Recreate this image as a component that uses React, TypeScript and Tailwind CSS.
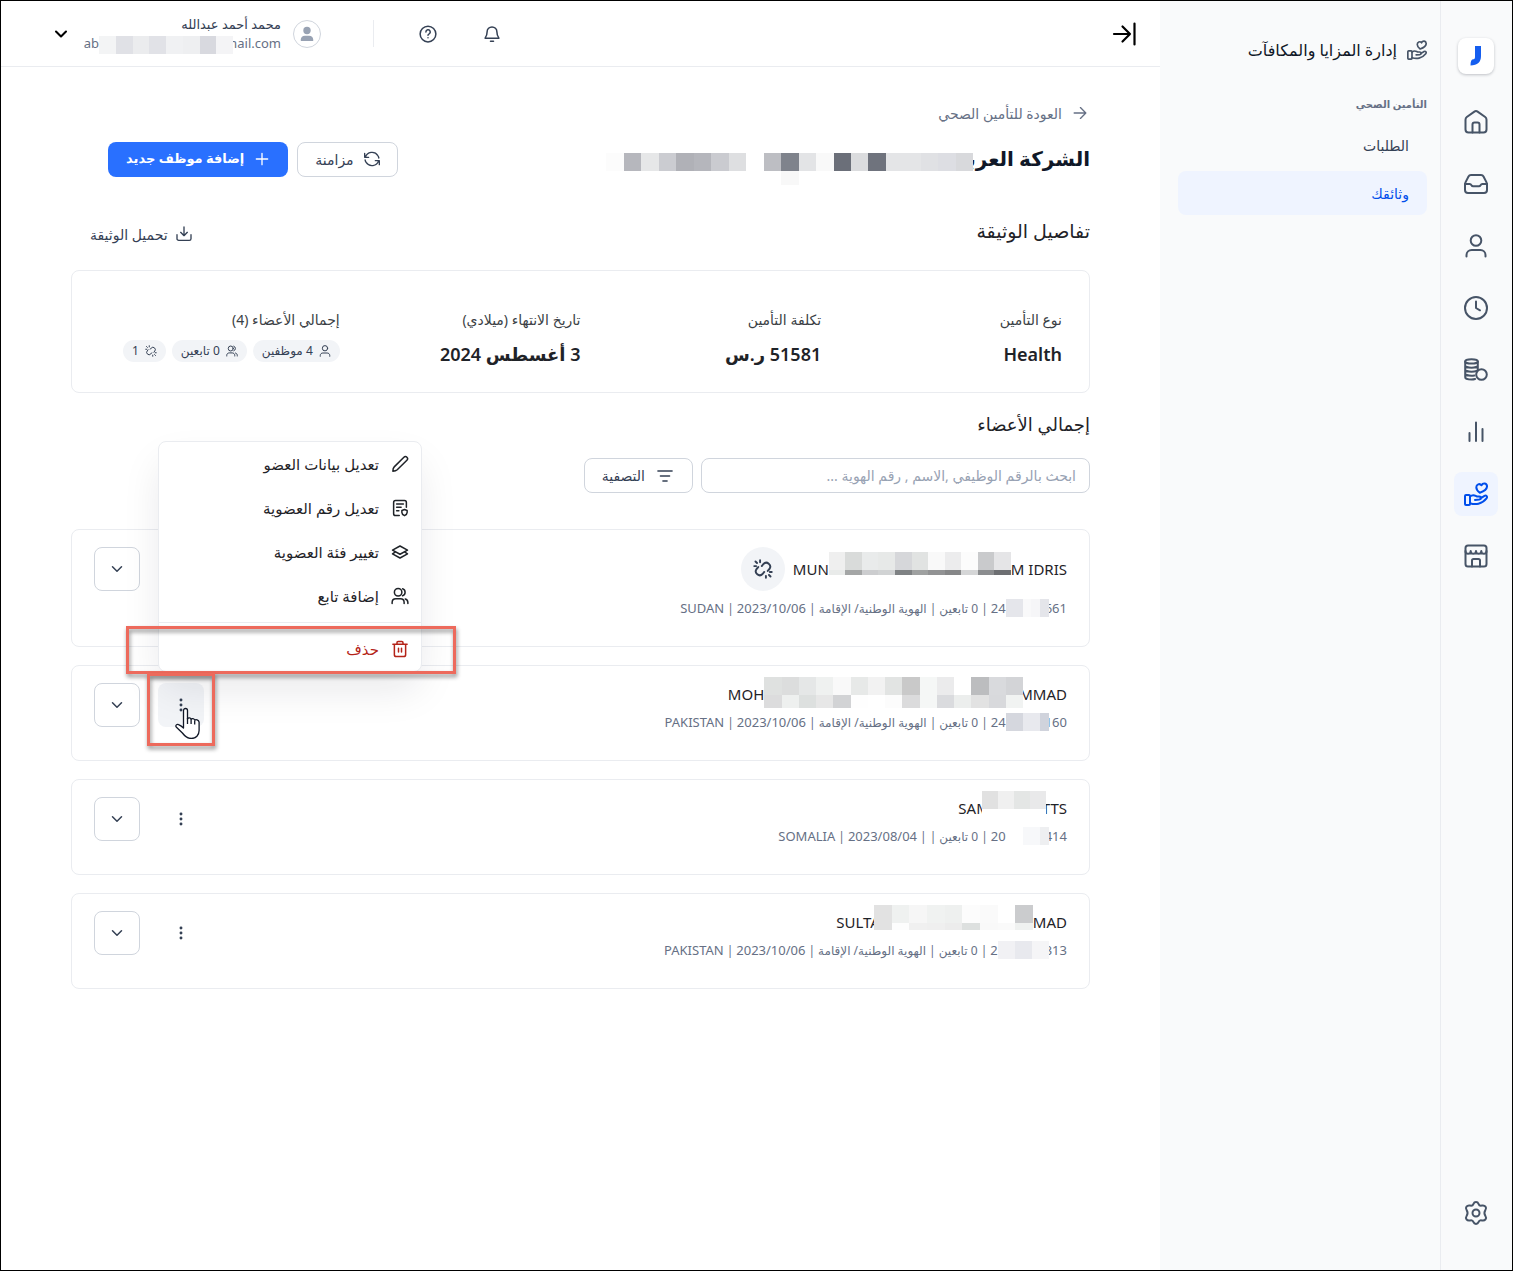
import type { ReactNode } from 'react';

interface IconProps {
  className?: string;
  stroke?: number;
  children?: ReactNode;
}

function Icon({ className = 'size-6', stroke = 2, children }: IconProps) {
  return (
    <svg
      className={`shrink-0 ${className}`}
      viewBox="0 0 24 24"
      fill="none"
      stroke="currentColor"
      strokeWidth={stroke}
      strokeLinecap="round"
      strokeLinejoin="round"
      aria-hidden="true"
    >
      {children}
    </svg>
  );
}

const paths = {
  home: (
    <>
      <path d="M8.500 22.500v-8c0-1.100.9-2 2-2h3c1.100 0 2 .9 2 2v8" />
      <path d="M10.400 1.600 2.800 7C1.900 7.700 1.500 8.600 1.500 9.700v9.800a3 3 0 0 0 3 3h15a3 3 0 0 0 3-3V9.700c0-1.100-.4-2-1.300-2.700l-7.600-5.400c-1-.7-2.200-.7-3.200 0Z" />
    </>
  ),
  inbox: (
    <>
      <path d="M1 12h4.700c.7 0 1.300.4 1.600 1l.2.300c.3.600.9 1 1.600 1h5.800c.7 0 1.300-.4 1.600-1l.2-.3c.3-.6.900-1 1.600-1H23" />
      <path d="M7 3h10c1.100 0 2 .5 2.500 1.500l2.900 5.600c.4.800.6 1.500.6 2.400V18a3 3 0 0 1-3 3H4a3 3 0 0 1-3-3v-5.500c0-.9.200-1.600.600-2.400l2.900-5.600C5 3.500 5.900 3 7 3Z" />
    </>
  ),
  user: (
    <>
      <circle cx="12" cy="6.500" r="5.300" />
      <path d="M2.500 22.500V21c0-3 2.300-5 5.200-5h8.600c2.900 0 5.200 2 5.200 5v1.500" />
    </>
  ),
  clock: (
    <>
      <circle cx="12" cy="12" r="11" />
      <path d="M12 5.500V12l4 2.300" />
    </>
  ),
  coins: (
    <>
      <ellipse cx="7.500" cy="3.400" rx="6.300" ry="2.200" />
      <path d="M1.200 3.400v15.800c0 1.300 2.800 2.300 6.300 2.300 1.300 0 2.600-.2 3.600-.5M13.800 3.400v8M1.200 7.400c0 1.300 2.800 2.300 6.300 2.300s6.300-1 6.300-2.300M1.200 11.400c0 1.300 2.800 2.300 6.300 2.300 2 0 3.800-.3 5-.8M1.200 15.400c0 1.300 2.800 2.300 6.300 2.300 1.200 0 2-.1 2.900-.3" />
      <circle cx="17.500" cy="16.500" r="5.300" />
    </>
  ),
  chart: <path d="M5.500 21v-8M12 21V2.500M18.500 21V9" />,
  hand: (
    <>
      <rect x="1" y="13" width="5" height="10" rx="1" />
      <path d="M6 14.500c1.600-1.300 3.800-1.600 5.700-.6l1 .5h2.500c2.400 0 2.400 3 .2 3.200l-4.400.3M16.500 16.400l4-2.600c1.700-1 3.300 1 2 2.600-2 2.600-4.800 4.500-8 5.300-2.800.7-5.800.4-8.500-.5" />
      <path d="M15.800 10.800c-2.200-1.700-3.500-3.500-3.500-5.500 0-2.900 3.300-4.300 5.200-2C18.800.500 22.600.900 23 4c.2 2.700-2.300 5-7.200 6.800Z" />
    </>
  ),
  store: (
    <>
      <rect x="1.500" y="1.500" width="21" height="21" rx="2.500" />
      <path d="M1.500 7c0 3.800 5.200 3.800 5.200 0 0 3.800 5.300 3.800 5.300 0 0 3.800 5.300 3.800 5.300 0 0 3.800 5.200 3.800 5.200 0M8 22.500v-6c0-.8.7-1.500 1.500-1.500h5c.8 0 1.500.7 1.500 1.500v6" />
    </>
  ),
  settings: (
    <>
      <path d="M9.500 2.800c.9-2.400 4.100-2.400 5 0 .5 1.400 1.900 2.100 3.300 1.800 3.400-.7 5.300 1.900 3.600 4.400-1.300 2-1.300 4 0 6 1.700 2.500-.2 5.100-3.600 4.400-1.400-.3-2.800.4-3.300 1.800-.9 2.400-4.100 2.400-5 0-.5-1.400-1.900-2.100-3.300-1.800-3.400.7-5.300-1.900-3.600-4.400 1.300-2 1.300-4 0-6-1.700-2.500.2-5.100 3.600-4.400 1.400.3 2.800-.4 3.300-1.800Z" />
      <circle cx="12" cy="12" r="3.500" />
    </>
  ),
  unlink: (
    <>
      <path d="M10.500 8.500 12.500 6a4.700 4.700 0 0 1 7.200 6l-2 2.300M13.500 15.500 11.500 18a4.700 4.700 0 0 1-7.200-6l2-2.300" />
      <path d="M8.500 1.500v2.300M1.500 8.500h2.300M3 3l1.800 1.800M15.500 22.500v-2.300M22.500 15.500h-2.300M21 21l-1.800-1.800" />
    </>
  ),
  users: (
    <>
      <circle cx="9.500" cy="7" r="5" />
      <path d="M1.500 22v-1.300c0-2.900 2.200-4.900 5-4.900h6c2.800 0 5 2 5 4.900V22M15.500 2.300a5 5 0 0 1 0 9.400M19 16c2.200.6 3.500 2.400 3.500 4.700V22" />
    </>
  ),
  chevron: <path d="m6 9 6 6 6-6" />,
};

const railIcons = [
  { name: 'الرئيسية', icon: paths.home },
  { name: 'الوارد', icon: paths.inbox },
  { name: 'الموظفين', icon: paths.user },
  { name: 'الحضور', icon: paths.clock },
  { name: 'الرواتب', icon: paths.coins },
  { name: 'التقارير', icon: paths.chart },
  { name: 'المزايا', icon: paths.hand, active: true },
  { name: 'المتجر', icon: paths.store },
];

interface MosaicProps {
  rows: string[][];
  className: string;
}

// Pixelated block over private data, the cells share the given width
function Mosaic({ rows, className }: MosaicProps) {
  return (
    <span className={`relative flex shrink-0 flex-col self-start ${className}`}>
      {rows.map((row, y) => (
        <span key={y} className="flex min-h-0 flex-1 first:h-[18px] first:flex-none">
          {row.map((color, x) => (
            <span key={x} className="flex-1" style={{ backgroundColor: color }} />
          ))}
        </span>
      ))}
    </span>
  );
}

interface Member {
  first: string;
  last: string;
  nameMask: MosaicProps;
  idStart: string;
  idEnd: string;
  idMask: MosaicProps;
  kind: string;
  date: string;
  country: string;
  unlinked?: boolean;
  menuOpen?: boolean;
}

const members: Member[] = [
  {
    first: 'MUN',
    last: 'M IDRIS',
    nameMask: {
      className: '-mt-1.5 h-[23px] w-[182px]',
      rows: [
        ['#efefef', '#d9dbda', '#e9ebeb', '#e7e9e8', '#d6d7da', '#e1e3e2', '#f9f9f9', '#ececed', '#fcfcfc', '#c9cacc', '#e5e5e7'],
        ['#e9ebea', '#a4a6a6', '#cccdcf', '#d1d3d4', '#7f8284', '#9fa1a1', '#929394', '#868788', '#d5d6d7', '#8b8d8f', '#6d6f72'],
      ],
    },
    idStart: '24',
    idEnd: '661',
    idMask: { className: '-mr-1 h-[18px] w-[43px]', rows: [['#e5e6eb', '#e5e6eb', '#f9f9fa', '#f6f6f8', '#e4e5ea']] },
    kind: 'الهوية الوطنية/ الإقامة',
    date: '2023/10/06',
    country: 'SUDAN',
    unlinked: true,
  },
  {
    first: 'MOH',
    last: 'MMAD',
    nameMask: {
      className: '-mr-1 -mt-1.5 h-[31px] w-[259px]',
      rows: [
        ['#dfe1e0', '#dcdddd', '#e5e7e7', '#eff1f0', '#f9f9f9', '#e7e9e8', '#f2f2f2', '#e2e4e3', '#c9c9c9', '#f5f7f6', '#ebebec', '#ffffff', '#bcbdbf', '#d9dadd', '#d3d4d7'],
        ['#dcdcdd', '#eef0ef', '#dde0df', '#e7e7e7', '#d2d3d5', '#fefefe', '#ffffff', '#fcfcfc', '#dbdbdc', '#f5f7f6', '#dadbde', '#eceeed', '#e2e2e2', '#d8d9dc', '#f1f3f2'],
      ],
    },
    idStart: '24',
    idEnd: '160',
    idMask: { className: '-mr-1 h-[18px] w-[43px]', rows: [['#d5d7de', '#d5d7de', '#e8e9ee', '#e8e9ee', '#d0d3dc']] },
    kind: 'الهوية الوطنية/ الإقامة',
    date: '2023/10/06',
    country: 'PAKISTAN',
    menuOpen: true,
  },
  {
    first: 'SAM',
    last: 'TTS',
    nameMask: {
      className: '-mr-1 -ml-2 -mt-1.5 h-[26px] w-[64px]',
      rows: [
        ['#e1e1e1', '#f0f0f0', '#e4e6e5', '#e9e9ea'],
        ['#ffffff', '#ffffff', '#ffffff', '#ffffff'],
      ],
    },
    idStart: '20',
    idEnd: '414',
    idMask: { className: '-mr-1 h-[18px] w-[43px]', rows: [['#ffffff', '#ffffff', '#f7f8fa', '#f7f8fa', '#eeeff1']] },
    kind: '',
    date: '2023/08/04',
    country: 'SOMALIA',
  },
  {
    first: 'SULTA',
    last: 'MAD',
    nameMask: {
      className: '-ml-1.5 -mt-1.5 h-[25px] w-[159px]',
      rows: [
        ['#e2e2e2', '#eff1f0', '#f6f6f6', '#f0f2f1', '#eef0ef', '#fcfcfc', '#fafafa', '#ffffff', '#cbccce'],
        ['#e2e2e2', '#fdfdfd', '#f0f0f0', '#efefef', '#ececec', '#dde0df', '#f9f9f9', '#fafafa', '#eff1f0'],
      ],
    },
    idStart: '2',
    idEnd: '313',
    idMask: { className: '-mr-1 h-[18px] w-[51px]', rows: [['#f1f1f4', '#e8e9ee', '#f5f5f7']] },
    kind: 'الهوية الوطنية/ الإقامة',
    date: '2023/10/06',
    country: 'PAKISTAN',
  },
];

const menuItems = [
  {
    label: 'تعديل بيانات العضو',
    icon: <path d="M2.500 21.500c0-2.500.3-4.200 1.800-5.700L17.200 2.900a2.800 2.800 0 0 1 4 4L8.300 19.700c-1.600 1.500-3.300 1.800-5.800 1.800Z" />,
  },
  {
    label: 'تعديل رقم العضوية',
    icon: (
      <>
        <path d="M11 22H6a2.500 2.500 0 0 1-2.500-2.500v-15A2.500 2.500 0 0 1 6 2h12a2.500 2.500 0 0 1 2.500 2.500V11M7.500 6.500h9M7.500 11h6M7.500 15.500h3" />
        <path d="m18 14 3.500 1.300v2.800c0 1.800-1.300 3.200-3.500 4.100-2.200-.9-3.500-2.300-3.500-4.100v-2.800Z" />
      </>
    ),
  },
  {
    label: 'تغيير فئة العضوية',
    icon: (
      <>
        <path d="M12 4 22 9.500 12 15 2 9.500Z" />
        <path d="M5.500 12.200 2 14.500 12 20l10-5.500-3.500-2.300" />
      </>
    ),
  },
  { label: 'إضافة تابع', icon: paths.users },
];

function MemberMenu() {
  return (
    <div className="absolute bottom-full left-0 z-10 mb-[11px] w-[264px] rounded-lg border border-[#eaecf0] bg-white text-[15px] text-[#1f2328] shadow-[0_20px_40px_-4px_rgba(16,24,40,0.10)]">
      {menuItems.map(({ label, icon }) => (
        <button key={label} type="button" className="flex h-11 w-full items-center gap-3 px-3">
          <Icon className="size-[18px]">{icon}</Icon>
          {label}
        </button>
      ))}
      <hr className="my-1 border-[#eaecf0]" />
      <div className="relative">
        <button type="button" className="flex h-11 w-full items-center gap-3 px-3 text-[#b42318]">
          <Icon className="size-[18px]">
            <path d="M2.500 5.500h19M8 5V3.500C8 2.700 8.700 2 9.500 2h5c.8 0 1.500.7 1.500 1.500V5M4.500 5.500v14A2.500 2.500 0 0 0 7 22h10a2.500 2.500 0 0 0 2.500-2.500v-14M10 11v5M14 11v5" />
          </Icon>
          حذف
        </button>
        <Highlight className="-top-px -right-[35px] -bottom-[3px] -left-[33px]" />
      </div>
    </div>
  );
}

function Highlight({ className }: { className: string }) {
  return (
    <span
      className={`pointer-events-none absolute z-20 border-3 border-[#ed6a5c] drop-shadow-[1px_3px_2px_rgba(0,0,0,0.45)] ${className}`}
    />
  );
}

function Pointer() {
  return (
    <svg
      className="pointer-events-none absolute top-6 left-4 z-30 h-8 w-7"
      viewBox="0 0 28 32"
      fill="white"
      stroke="#111827"
      strokeWidth="1.3"
      strokeLinejoin="round"
      aria-hidden="true"
    >
      <path d="M9.500 18.500V3.500c0-2.700 4-2.700 4 0V12c.5-1.500 3.200-1.400 3.600.4.700-1.200 3.100-1 3.600.800 1-1 4-.5 4.400 2V23.500c0 4.500-3.200 8-7.700 8-4 0-6.600-2.300-9-5.500L2.200 20c-1-1.700.7-3.200 2.400-2.400 1.900.800 3.400 1.800 4.900 3.400Z" />
      <path d="M13.500 11v6M17.100 12.500V17M20.700 13.500V17.500" fill="none" />
    </svg>
  );
}

function MemberCard({ member }: { member: Member }) {
  return (
    <article className="flex justify-between rounded-lg border border-[#eaecf0] px-[22px] pt-[17px] pb-[27px]">
      <div className="flex flex-col gap-2">
        <div className="flex items-center gap-2">
          <h3 dir="ltr" className="flex h-[22px] items-center text-[15px] text-[#1f2328]">
            {member.first}
            <Mosaic {...member.nameMask} />
            {member.last}
          </h3>
          {member.unlinked ? (
            <span className="flex size-11 items-center justify-center rounded-full bg-[#f2f4f7] text-[#344054]">
              <Icon className="size-5" stroke={2.300}>
                {paths.unlink}
              </Icon>
            </span>
          ) : null}
        </div>
        <p className="flex h-5 items-center gap-[3px] text-[12px] whitespace-nowrap text-[#667085]">
          <span dir="ltr" className="flex items-center text-[13px]">
            {member.idStart}
            <Mosaic {...member.idMask} />
            {member.idEnd}
          </span>
          <span>|</span>
          <span>0 تابعين</span>
          <span>|</span>
          {member.kind ? <span>{member.kind}</span> : null}
          <span>|</span>
          <span className="text-[13px]">{member.date}</span>
          <span>|</span>
          <span className="text-[13px]">{member.country}</span>
        </p>
      </div>
      <div className="flex gap-[18px]">
        <div className="relative h-11">
          <button
            type="button"
            aria-label="خيارات"
            className={`flex h-11 w-[46px] items-center justify-center rounded-lg text-[#344054] ${member.menuOpen ? 'bg-[#f2f4f7]' : ''}`}
          >
            <Icon className="size-5" stroke={3.500}>
              <path d="M12 6v.01M12 12v.01M12 18v.01" />
            </Icon>
          </button>
          {member.menuOpen ? (
            <>
              <MemberMenu />
              <Highlight className="-top-2.5 -right-[11px] -bottom-[19px] -left-[11px]" />
              <Pointer />
            </>
          ) : null}
        </div>
        <button
          type="button"
          aria-label="عرض التفاصيل"
          className="flex h-11 w-[46px] items-center justify-center rounded-lg border border-[#d0d5dd] text-[#344054]"
        >
          <Icon className="size-[18px]">{paths.chevron}</Icon>
        </button>
      </div>
    </article>
  );
}

function Pill({ icon, children }: { icon: ReactNode; children: ReactNode }) {
  return (
    <span className="flex h-[22px] items-center gap-1.5 rounded-full bg-[#f2f4f7] px-[9px] text-[12px] whitespace-nowrap text-[#344054]">
      <Icon className="size-3">{icon}</Icon>
      {children}
    </span>
  );
}

function Detail({ label, children }: { label: string; children: ReactNode }) {
  return (
    <div className="flex flex-col gap-1">
      <dt className="h-6 text-[14px] leading-6 text-[#3b3f45]">{label}</dt>
      <dd className="text-[18px] leading-9 font-semibold text-[#1f2328]">{children}</dd>
    </div>
  );
}

function Rail() {
  return (
    <nav className="flex w-[72px] shrink-0 flex-col items-center border-x border-l-[#eaecf0] border-r-[#f9fafb] bg-[#f9fafb] pt-[37px] pb-[35px] text-[#475467]">
      <a
        href="#"
        aria-label="جسر"
        className="flex size-9 items-center justify-center rounded-lg bg-white shadow-[0_1px_3px_rgba(16,24,40,0.25)]"
      >
        <svg className="size-5" viewBox="0 0 20 20" aria-hidden="true">
          <path d="M9 0h6v10c0 6-3.500 9.500-10.500 9.500 0-4 1-6.200 2.500-6.200 1.400 0 2-.8 2-2.300Z" fill="#155eef" />
        </svg>
      </a>
      <div className="mt-[26px] flex flex-col gap-[18px]">
        {railIcons.map(({ name, icon, active }) => (
          <a
            key={name}
            href="#"
            aria-label={name}
            className={`flex size-11 items-center justify-center rounded-lg ${active ? 'bg-[#eff4ff] text-[#004eeb]' : ''}`}
          >
            <Icon>{icon}</Icon>
          </a>
        ))}
      </div>
      <a href="#" aria-label="الإعدادات" className="mt-auto flex size-11 items-center justify-center">
        <Icon>{paths.settings}</Icon>
      </a>
    </nav>
  );
}

function Sidebar() {
  return (
    <aside className="w-[280px] shrink-0 bg-[#f9fafb] pt-[33px] pr-[13px] pl-[18px]">
      <h2 className="flex h-8 items-center gap-2.5 text-[16px] text-[#101828]">
        <Icon className="size-5 text-[#475467]">{paths.hand}</Icon>
        إدارة المزايا والمكافآت
      </h2>
      <h3 className="mt-7 text-[10px] leading-5 font-bold text-[#667085]">التأمين الصحي</h3>
      <nav className="mt-[9px] flex flex-col gap-1 text-[14px]">
        <a href="#" className="flex h-11 items-center rounded-lg px-[18px] text-[#344054]">
          الطلبات
        </a>
        <a href="#" className="flex h-11 items-center rounded-lg bg-[#eff4ff] px-[18px] font-medium text-[#004eeb]">
          وثائقك
        </a>
      </nav>
    </aside>
  );
}

function Header() {
  return (
    <header className="flex h-[66px] items-center border-b border-[#eaecf0] pr-6 pl-[50px]">
      <button type="button" aria-label="طي القائمة" className="text-black">
        <Icon stroke={2.200}>
          <path d="M2 12h16M10.500 4.500 18 12l-7.500 7.500M22.500 1.500v21" />
        </Icon>
      </button>
      <div className="mr-auto flex items-center text-[#344054]">
        <button type="button" aria-label="التنبيهات">
          <Icon className="size-[18px]">
            <path d="M12 2.500a6.500 6.500 0 0 0-6.500 6.500c0 4-.8 6-2.700 8.500h18.400C19.300 15 18.500 13 18.500 9A6.500 6.500 0 0 0 12 2.500ZM10 21.500h4" />
          </Icon>
        </button>
        <button type="button" aria-label="المساعدة" className="mr-[46px]">
          <Icon className="size-[18px]">
            <circle cx="12" cy="12" r="10.500" />
            <path d="M9.200 9.300a2.900 2.900 0 1 1 4.300 2.500c-1 .5-1.500 1-1.500 2M12 17v.1" />
          </Icon>
        </button>
        <span className="mr-[45px] h-[27px] w-px bg-[#eaecf0]" />
        <div className="mr-[52px] flex items-center gap-3">
          <span className="flex size-7 items-center justify-center rounded-full border border-[#d0d5dd] text-[#98a2b3]">
            <svg className="size-4" viewBox="0 0 16 16" fill="currentColor" aria-hidden="true">
              <circle cx="8" cy="4.500" r="3.700" />
              <path d="M1.800 15v-1.500c0-2.200 1.800-3.700 4-3.700h4.400c2.200 0 4 1.500 4 3.700V15Z" />
            </svg>
          </span>
          <div className="flex w-[195px] flex-col">
            <p className="text-[13px] leading-5 font-medium">محمد أحمد عبدالله</p>
            <p dir="ltr" className="flex h-5 items-center justify-end text-[13px] text-[#667085]">
              ab
              <Mosaic
                className="-mr-2 h-[18px] w-[134px] translate-y-0.5"
                rows={[['#f3f4f5', '#e0e1e6', '#ebecee', '#e1e2e7', '#f0f1f3', '#eeeff1', '#d8d9df', '#f4f4f6']]}
              />
              mail.com
            </p>
          </div>
        </div>
        <button type="button" aria-label="الحساب" className="mr-[15px] text-black">
          <Icon className="size-5" stroke={2.500}>
            {paths.chevron}
          </Icon>
        </button>
      </div>
    </header>
  );
}

export default function App() {
  return (
    <div
      dir="rtl"
      lang="ar"
      className="flex min-h-screen border border-black bg-white font-['Noto_Sans','DejaVu_Sans',sans-serif]"
    >
      <Rail />
      <Sidebar />
      <div className="min-w-0 flex-1">
        <Header />
        <main className="px-[70px] pt-8">
          <a href="#" className="flex h-7 items-center gap-2 text-[14px] text-[#667085]">
            <Icon className="size-5" stroke={1.600}>
              <path d="M5 12h14M12.500 5.500 19 12l-6.500 6.500" />
            </Icon>
            العودة للتأمين الصحي
          </a>
          <div className="mt-3.5 flex items-center justify-between pl-[37px]">
            <h1 className="flex h-9 items-center text-[20px] leading-9 font-semibold text-[#101828]">
              الشركة العربـ
              <span dir="ltr" className="contents">
                <Mosaic
                  className="-mr-3 mt-3 h-[32px] w-[367px]"
                  rows={[
                    ['#fcfcfc', '#b6b7bd', '#e6e7e8', '#cbccd1', '#b0b1b7', '#b5b6bc', '#cacbd0', '#dedfe1', '#ffffff', '#bdbec3', '#7f838c', '#e3e4e6', '#f9f9f9', '#6b6f79', '#dbdcde', '#6f737d', '#e4e5e7', '#e4e5e7', '#e0e1e4', '#dddee3', '#d8d9dc'],
                    ['#ffffff', '#ffffff', '#ffffff', '#ffffff', '#ffffff', '#ffffff', '#ffffff', '#ffffff', '#ffffff', '#ffffff', '#f8f8f8', '#ffffff', '#ffffff', '#ffffff', '#ffffff', '#ffffff', '#ffffff', '#ffffff', '#ffffff', '#ffffff', '#ffffff'],
                  ]}
                />
              </span>
            </h1>
            <div className="flex gap-[9px] text-[14px]">
              <button
                type="button"
                className="flex h-[35px] items-center gap-2.5 rounded-lg border border-[#d0d5dd] px-[17px] text-[#344054]"
              >
                <Icon className="size-4">
                  <path d="M1 3.500v6h6M23 20.500v-6h-6M2 9.500a10.500 10.500 0 0 1 18.800-2.700c.7 1 1.200 2.200 1.500 3.700M22 14.500a10.500 10.500 0 0 1-18.800 2.700c-.7-1-1.200-2.200-1.500-3.700" />
                </Icon>
                مزامنة
              </button>
              <button
                type="button"
                className="flex h-[35px] items-center gap-2.5 rounded-lg bg-[#2970ff] px-[18px] text-[13px] font-semibold text-white"
              >
                <Icon className="size-4">
                  <path d="M12 3.500v17M3.500 12h17" />
                </Icon>
                إضافة موظف جديد
              </button>
            </div>
          </div>
          <div className="mt-[34px] flex h-10 items-center justify-between pl-[19px]">
            <h2 className="text-[19px] text-[#1f2328]">تفاصيل الوثيقة</h2>
            <button type="button" className="flex items-center gap-2 pt-1.5 text-[14px] text-[#344054]">
              <Icon className="size-4">
                <path d="M12 1.500v13M7 9.500l5 5 5-5M1.500 13v6A2.500 2.500 0 0 0 4 21.500h16a2.500 2.500 0 0 0 2.500-2.500v-6" />
              </Icon>
              تحميل الوثيقة
            </button>
          </div>
          <dl className="mt-[19px] grid grid-cols-4 rounded-lg border border-[#eaecf0] px-[27px] pt-[37px] pb-5">
            <Detail label="نوع التأمين">Health</Detail>
            <Detail label="تكلفة التأمين">51581 ر.س</Detail>
            <Detail label="تاريخ الانتهاء (ميلادي)">3 أغسطس 2024</Detail>
            <Detail label="إجمالي الأعضاء (4)">
              <span className="flex gap-1.5 pt-1 font-normal">
                <Pill icon={paths.user}>4 موظفين</Pill>
                <Pill icon={paths.users}>0 تابعين</Pill>
                <Pill icon={paths.unlink}>1</Pill>
              </span>
            </Detail>
          </dl>
          <h2 className="mt-[13px] text-[18px] leading-9 text-[#1f2328]">إجمالي الأعضاء</h2>
          <div className="mt-4 flex gap-2 text-[14px]">
            <input
              type="search"
              aria-label="ابحث في الأعضاء"
              placeholder="ابحث بالرقم الوظيفي ,الاسم , رقم الهوية ..."
              className="h-[35px] w-[389px] rounded-lg border border-[#d0d5dd] px-[13px] placeholder:text-[#98a2b3]"
            />
            <button
              type="button"
              className="flex h-[35px] items-center gap-2.5 rounded-lg border border-[#d0d5dd] px-[17px] font-medium text-[#344054]"
            >
              <Icon className="size-5" stroke={1.800}>
                <path d="M3.500 6h17M6.500 12h11M9.500 18h5" />
              </Icon>
              التصفية
            </button>
          </div>
          <section className="mt-9 flex flex-col gap-[18px]">
            {members.map((member) => (
              <MemberCard key={member.first} member={member} />
            ))}
          </section>
        </main>
      </div>
    </div>
  );
}
